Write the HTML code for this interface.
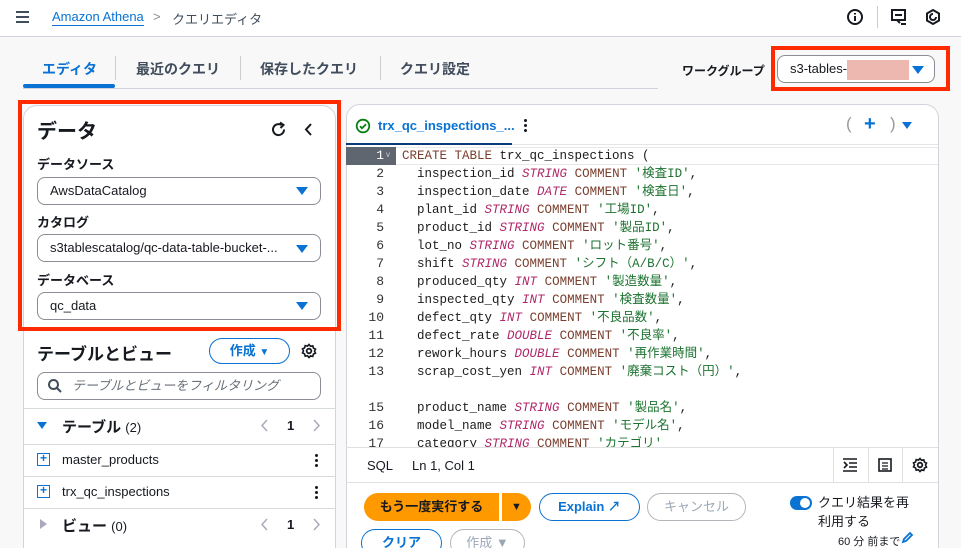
<!DOCTYPE html>
<html><head><meta charset="utf-8"><style>
*{box-sizing:border-box;margin:0;padding:0}
html,body{width:961px;height:548px;overflow:hidden}
body{background:#f8f8f8;font-family:"Liberation Sans","Noto Sans CJK JP",sans-serif;color:#16191f;position:relative;font-size:13px}
.a{position:absolute}
.top{left:0;top:0;width:961px;height:37px;background:#fff;border-bottom:1px solid #d1d5db}
.sel{position:absolute;background:#fff;border:1px solid #8c8c94;border-radius:8px;height:28px;padding-left:12px;line-height:26px;font-size:13px}
.tri{position:absolute;width:0;height:0;border-left:6px solid transparent;border-right:6px solid transparent;border-top:8px solid #0972d3}
.red{position:absolute;border:4px solid #ff2a00}
.lbl{position:absolute;font-weight:bold;font-size:13px}
.hl{position:absolute;height:1px;background:#d5dbdb}
.code{position:absolute;left:402px;font-family:"Liberation Mono","Noto Sans CJK JP",monospace;font-size:12.5px;line-height:18px;white-space:pre;color:#1b1b1b}
.num{position:absolute;left:346px;width:38px;text-align:right;font-family:"Liberation Mono",monospace;font-size:13px;line-height:18px;color:#333}
.k{color:#7a3e2d}.t{color:#b0286a;font-style:italic}.s{color:#1d7330}
.btn{position:absolute;border-radius:16px;height:28px;text-align:center;line-height:26px;font-weight:bold;font-size:13px}
.keb{position:absolute;width:3px;height:3px;background:#16191f;border-radius:2px;box-shadow:0 5px 0 #16191f,0 10px 0 #16191f}
</style></head><body>
<div class="a top"></div>
<div class="a" style="left:16px;top:11px;width:13px;height:2px;background:#414d5c;box-shadow:0 5px 0 #414d5c,0 10px 0 #414d5c"></div>
<div class="a" style="left:52px;top:9px;font-size:13px;color:#0972d3;border-bottom:1px solid #0972d3;line-height:16px">Amazon Athena</div>
<div class="a" style="left:153px;top:9px;color:#8c8c94;font-size:13px">&gt;</div>
<div class="a" style="left:172px;top:9px;color:#414d5c;font-size:13px">クエリエディタ</div>
<svg class="a" style="left:846px;top:8px" width="18" height="18" viewBox="0 0 18 18"><circle cx="9" cy="9" r="7" fill="none" stroke="#16191f" stroke-width="2"/><path d="M9 8v5M9 5v1.5" stroke="#16191f" stroke-width="2"/></svg>
<div class="a" style="left:877px;top:6px;width:1px;height:22px;background:#ccc"></div>
<svg class="a" style="left:890px;top:8px" width="18" height="18" viewBox="0 0 18 18"><rect x="2" y="2" width="13" height="10" fill="none" stroke="#16191f" stroke-width="2"/><path d="M5 7h7M7 12l3 3M11 16h5" stroke="#16191f" stroke-width="2"/></svg>
<svg class="a" style="left:924px;top:8px" width="18" height="18" viewBox="0 0 18 18"><path d="M9 2l6 3.5v7L9 16l-6-3.5v-7z" fill="none" stroke="#16191f" stroke-width="2"/><path d="M9 6a3 3 0 1 0 3 3" fill="none" stroke="#16191f" stroke-width="2"/></svg>

<div class="a" style="left:23px;top:88px;width:635px;height:1px;background:#d1d5db"></div>
<div class="a" style="left:23px;top:84px;width:92px;height:4px;background:#0972d3;border-radius:2px"></div>
<div class="a" style="left:42px;top:59px;font-size:14px;font-weight:bold;color:#0972d3">エディタ</div>
<div class="a" style="left:115px;top:56px;width:1px;height:24px;background:#ccc"></div>
<div class="a" style="left:136px;top:59px;font-size:14px;font-weight:bold;color:#414d5c">最近のクエリ</div>
<div class="a" style="left:240px;top:56px;width:1px;height:24px;background:#ccc"></div>
<div class="a" style="left:260px;top:59px;font-size:14px;font-weight:bold;color:#414d5c">保存したクエリ</div>
<div class="a" style="left:380px;top:56px;width:1px;height:24px;background:#ccc"></div>
<div class="a" style="left:400px;top:59px;font-size:14px;font-weight:bold;color:#414d5c">クエリ設定</div>
<div class="lbl" style="left:682px;top:62px;font-size:12px">ワークグループ</div>
<div class="sel" style="left:777px;top:55px;width:158px">s3-tables-<span style="display:inline-block;width:62px;height:20px;background:#ecb8b0;vertical-align:middle"></span></div>
<div class="tri" style="left:912px;top:66px"></div>
<div class="red" style="left:771px;top:46px;width:179px;height:45px"></div>

<div class="a" style="left:23px;top:105px;width:313px;height:460px;background:#fff;border:1px solid #d1d5db;border-radius:14px"></div>
<div class="a" style="left:37px;top:115px;font-size:20px;font-weight:bold">データ</div>
<svg class="a" style="left:270px;top:121px" width="17" height="17" viewBox="0 0 17 17"><path d="M14 8.5A5.5 5.5 0 1 1 11.5 4" fill="none" stroke="#16191f" stroke-width="2"/><path d="M10 1.5l3.5 2.5-3 3" fill="none" stroke="#16191f" stroke-width="2"/></svg>
<svg class="a" style="left:303px;top:122px" width="12" height="15" viewBox="0 0 12 15"><path d="M8 2L3 7.5 8 13" fill="none" stroke="#16191f" stroke-width="2"/></svg>
<div class="lbl" style="left:37px;top:154px">データソース</div>
<div class="sel" style="left:37px;top:177px;width:284px">AwsDataCatalog</div><div class="tri" style="left:296px;top:187px"></div>
<div class="lbl" style="left:37px;top:212px">カタログ</div>
<div class="sel" style="left:37px;top:234px;width:284px">s3tablescatalog/qc-data-table-bucket-...</div><div class="tri" style="left:296px;top:245px"></div>
<div class="lbl" style="left:37px;top:270px">データベース</div>
<div class="sel" style="left:37px;top:292px;width:284px">qc_data</div><div class="tri" style="left:296px;top:302px"></div>
<div class="red" style="left:18px;top:100px;width:323px;height:231px"></div>

<div class="a" style="left:37px;top:340px;font-size:17px;font-weight:bold">テーブルとビュー</div>
<div class="btn" style="left:209px;top:338px;width:81px;height:26px;line-height:24px;border:1px solid #0972d3;color:#0972d3">作成 <span style="font-size:10px">▼</span></div>
<svg class="a" style="left:301px;top:343px" width="16" height="16" viewBox="0 0 16 16"><circle cx="8" cy="8" r="2.3" fill="none" stroke="#16191f" stroke-width="1.8"/><path d="M8 1.5l1.5 1.8 2.3-.5.6 2.3 2.1 1-1 2 1 2-2.1 1-.6 2.3-2.3-.5L8 14.5l-1.5-1.8-2.3.5-.6-2.3-2.1-1 1-2-1-2 2.1-1 .6-2.3 2.3.5z" fill="none" stroke="#16191f" stroke-width="1.6"/></svg>
<div class="sel" style="left:37px;top:372px;width:284px;padding-left:34px;color:#687078;font-style:italic">テーブルとビューをフィルタリング</div>
<svg class="a" style="left:47px;top:378px" width="16" height="16" viewBox="0 0 16 16"><circle cx="6.5" cy="6.5" r="4.5" fill="none" stroke="#414d5c" stroke-width="2"/><path d="M10 10l4 4" stroke="#414d5c" stroke-width="2"/></svg>
<div class="hl" style="left:23px;top:408px;width:313px"></div>
<div class="tri" style="left:37px;top:422px;border-width:7px 5px 0 5px"></div>
<div class="a" style="left:62px;top:416px;font-size:15px;font-weight:bold">テーブル <span style="font-weight:normal;font-size:13px">(2)</span></div>
<svg class="a" style="left:260px;top:419px" width="10" height="13" viewBox="0 0 10 13"><path d="M7 1L2 6.5 7 12" fill="none" stroke="#aab" stroke-width="1.5"/></svg>
<div class="a" style="left:287px;top:418px;font-weight:bold">1</div>
<svg class="a" style="left:311px;top:419px" width="10" height="13" viewBox="0 0 10 13"><path d="M3 1l5 5.5L3 12" fill="none" stroke="#aab" stroke-width="1.5"/></svg>
<div class="hl" style="left:23px;top:444px;width:313px"></div>
<div class="a" style="left:37px;top:453px;width:13px;height:13px;border:1.5px solid #0972d3;color:#0972d3;font-size:12px;line-height:9px;text-align:center;font-weight:bold">+</div>
<div class="a" style="left:62px;top:452px">master_products</div>
<div class="keb" style="left:315px;top:454px"></div>
<div class="hl" style="left:23px;top:476px;width:313px"></div>
<div class="a" style="left:37px;top:485px;width:13px;height:13px;border:1.5px solid #0972d3;color:#0972d3;font-size:12px;line-height:9px;text-align:center;font-weight:bold">+</div>
<div class="a" style="left:62px;top:484px">trx_qc_inspections</div>
<div class="keb" style="left:315px;top:486px"></div>
<div class="hl" style="left:23px;top:508px;width:313px"></div>
<div class="a" style="left:40px;top:519px;width:0;height:0;border-top:5px solid transparent;border-bottom:5px solid transparent;border-left:7px solid #aab"></div>
<div class="a" style="left:62px;top:515px;font-size:15px;font-weight:bold">ビュー <span style="font-weight:normal;font-size:13px">(0)</span></div>
<svg class="a" style="left:260px;top:518px" width="10" height="13" viewBox="0 0 10 13"><path d="M7 1L2 6.5 7 12" fill="none" stroke="#aab" stroke-width="1.5"/></svg>
<div class="a" style="left:287px;top:517px;font-weight:bold">1</div>
<svg class="a" style="left:311px;top:518px" width="10" height="13" viewBox="0 0 10 13"><path d="M3 1l5 5.5L3 12" fill="none" stroke="#aab" stroke-width="1.5"/></svg>

<div class="a" style="left:346px;top:104px;width:593px;height:460px;background:#fff;border:1px solid #d1d5db;border-radius:14px"></div>
<svg class="a" style="left:355px;top:118px" width="16" height="16" viewBox="0 0 16 16"><circle cx="8" cy="8" r="6.3" fill="none" stroke="#037f0c" stroke-width="1.8"/><path d="M5 8.2l2 2 4-4" fill="none" stroke="#037f0c" stroke-width="1.8"/></svg>
<div class="a" style="left:378px;top:118px;font-weight:bold;color:#0972d3">trx_qc_inspections_...</div>
<div class="keb" style="left:524px;top:119px;width:2.5px;height:2.5px"></div>
<div class="a" style="left:846px;top:114px;color:#999;font-size:17px">(</div>
<div class="a" style="left:864px;top:113px;color:#0972d3;font-size:20px;font-weight:bold">+</div>
<div class="a" style="left:890px;top:114px;color:#999;font-size:17px">)</div>
<div class="tri" style="left:902px;top:122px;border-width:7px 5px 0 5px"></div>
<div class="a" style="left:346px;top:144px;width:592px;height:1px;background:#e5e5e5"></div>
<div class="a" style="left:346px;top:143px;width:166px;height:2px;background:#0a3a7a"></div>
<div class="a" style="left:346px;top:147px;width:50px;height:18px;background:#5f6670"></div>
<div class="a" style="left:396px;top:147px;width:542px;height:18px;border-top:1px solid #e8e8e8;border-bottom:1px solid #e8e8e8"></div>
<div class="num" style="top:147px;color:#fff">1</div>
<div class="a" style="left:386px;top:150px;color:#ccc;font-size:8px">v</div>
<div class="num" style="top:165px;line-height:18px">2<br>3<br>4<br>5<br>6<br>7<br>8<br>9<br>10<br>11<br>12<br>13<br><br>15<br>16<br>17</div>
<div class="code" style="top:147px;height:300px;overflow:hidden;width:530px"><span class="k">CREATE TABLE</span> trx_qc_inspections (
  inspection_id <span class="t">STRING</span> <span class="k">COMMENT</span> <span class="s">'検査ID'</span>,
  inspection_date <span class="t">DATE</span> <span class="k">COMMENT</span> <span class="s">'検査日'</span>,
  plant_id <span class="t">STRING</span> <span class="k">COMMENT</span> <span class="s">'工場ID'</span>,
  product_id <span class="t">STRING</span> <span class="k">COMMENT</span> <span class="s">'製品ID'</span>,
  lot_no <span class="t">STRING</span> <span class="k">COMMENT</span> <span class="s">'ロット番号'</span>,
  shift <span class="t">STRING</span> <span class="k">COMMENT</span> <span class="s">'シフト（A/B/C）'</span>,
  produced_qty <span class="t">INT</span> <span class="k">COMMENT</span> <span class="s">'製造数量'</span>,
  inspected_qty <span class="t">INT</span> <span class="k">COMMENT</span> <span class="s">'検査数量'</span>,
  defect_qty <span class="t">INT</span> <span class="k">COMMENT</span> <span class="s">'不良品数'</span>,
  defect_rate <span class="t">DOUBLE</span> <span class="k">COMMENT</span> <span class="s">'不良率'</span>,
  rework_hours <span class="t">DOUBLE</span> <span class="k">COMMENT</span> <span class="s">'再作業時間'</span>,
  scrap_cost_yen <span class="t">INT</span> <span class="k">COMMENT</span> <span class="s">'廃棄コスト（円）'</span>,

  product_name <span class="t">STRING</span> <span class="k">COMMENT</span> <span class="s">'製品名'</span>,
  model_name <span class="t">STRING</span> <span class="k">COMMENT</span> <span class="s">'モデル名'</span>,
  category <span class="t">STRING</span> <span class="k">COMMENT</span> <span class="s">'カテゴリ'</span></div>
<div class="a" style="left:346px;top:447px;width:592px;height:1px;background:#e0e0e0"></div>
<div class="a" style="left:367px;top:458px">SQL</div>
<div class="a" style="left:412px;top:458px">Ln 1, Col 1</div>
<div class="a" style="left:833px;top:448px;width:1px;height:34px;background:#e0e0e0"></div>
<div class="a" style="left:868px;top:448px;width:1px;height:34px;background:#e0e0e0"></div>
<div class="a" style="left:902px;top:448px;width:1px;height:34px;background:#e0e0e0"></div>
<svg class="a" style="left:842px;top:457px" width="16" height="16" viewBox="0 0 16 16"><path d="M1 2h14M1 14h14M7 6h8M7 10h8M2 5l3 3-3 3" fill="none" stroke="#16191f" stroke-width="1.6"/></svg>
<svg class="a" style="left:877px;top:457px" width="16" height="16" viewBox="0 0 16 16"><rect x="2" y="2" width="12" height="12" fill="none" stroke="#16191f" stroke-width="1.6"/><path d="M5 6h6M5 9h6M5 12h6" stroke="#16191f" stroke-width="1.3"/></svg>
<svg class="a" style="left:912px;top:457px" width="16" height="16" viewBox="0 0 16 16"><circle cx="8" cy="8" r="2.3" fill="none" stroke="#16191f" stroke-width="1.8"/><path d="M8 1.5l1.5 1.8 2.3-.5.6 2.3 2.1 1-1 2 1 2-2.1 1-.6 2.3-2.3-.5L8 14.5l-1.5-1.8-2.3.5-.6-2.3-2.1-1 1-2-1-2 2.1-1 .6-2.3 2.3.5z" fill="none" stroke="#16191f" stroke-width="1.6"/></svg>
<div class="a" style="left:346px;top:482px;width:592px;height:1px;background:#e0e0e0"></div>
<div class="btn" style="left:364px;top:493px;width:135px;background:#ff9900;border-radius:16px 0 0 16px;color:#16191f;line-height:28px">もう一度実行する</div>
<div class="btn" style="left:502px;top:493px;width:29px;background:#ff9900;border-radius:0 16px 16px 0;font-size:11px;line-height:28px">▼</div>
<div class="btn" style="left:539px;top:493px;width:101px;border:1.5px solid #0972d3;color:#0972d3">Explain ↗</div>
<div class="btn" style="left:647px;top:493px;width:99px;border:1px solid #b4b4bb;color:#9ba7b6;font-weight:normal">キャンセル</div>
<div class="a" style="left:790px;top:496px;width:22px;height:14px;border-radius:7px;background:#0972d3"></div>
<div class="a" style="left:800px;top:498px;width:10px;height:10px;border-radius:5px;background:#fff"></div>
<div class="a" style="left:818px;top:493px;line-height:19px">クエリ結果を再<br>利用する</div>
<div class="a" style="left:838px;top:533px;font-size:11px">60 分 前まで</div>
<svg class="a" style="left:901px;top:531px" width="13" height="13" viewBox="0 0 13 13"><path d="M2 11l1-3 6-6 2 2-6 6z" fill="none" stroke="#0972d3" stroke-width="1.8"/></svg>
<div class="btn" style="left:361px;top:529px;width:81px;border:1.5px solid #0972d3;color:#0972d3">クリア</div>
<div class="btn" style="left:450px;top:529px;width:75px;border:1px solid #b4b4bb;color:#9ba7b6;font-weight:normal">作成 ▼</div>
</body></html>
